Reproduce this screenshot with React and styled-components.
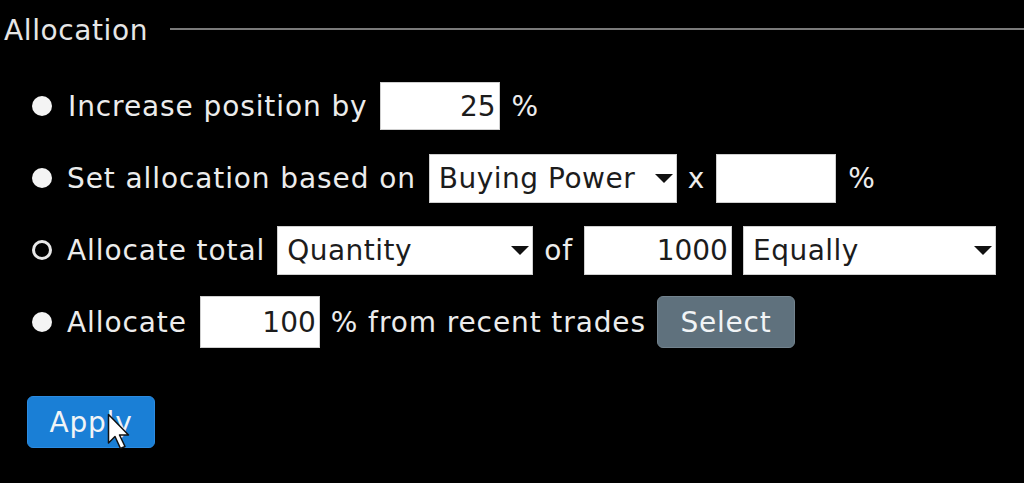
import React from "react";
import styled, { createGlobalStyle } from "styled-components";

const GlobalStyle = createGlobalStyle`
  html, body {
    margin: 0;
    padding: 0;
    background: #000;
  }
  body {
    font-family: "DejaVu Sans", Verdana, sans-serif;
    color: #ececec;
    overflow: hidden;
  }
`;

const Panel = styled.div`
  width: 1024px;
  height: 483px;
  background: #000;
  position: relative;
`;

const Header = styled.div`
  display: flex;
  align-items: center;
  gap: 22px;
  height: 58px;
  padding: 3px 0 0 4px;
  box-sizing: border-box;
`;

const Title = styled.span`
  font-size: 28px;
  letter-spacing: 0.6px;
  color: #e6e6e6;
  line-height: 1;
`;

const Rule = styled.div`
  flex: 1;
  height: 2px;
  margin-top: -4px;
  background: #7a7a7a;
`;

const Options = styled.div`
  display: flex;
  flex-direction: column;
  gap: 22px;
  padding: 23px 0 0 32px;
`;

const Row = styled.div`
  display: flex;
  align-items: center;
  height: 50px;
  gap: ${(p) => p.$gap || 12}px;
`;

const Radio = styled.span`
  width: 20px;
  height: 20px;
  border-radius: 50%;
  box-sizing: border-box;
  flex-shrink: 0;
  margin-right: 4px;
  background: ${(p) => (p.$checked ? "transparent" : "#f4f4f4")};
  border: ${(p) => (p.$checked ? "3px solid #e8e8e8" : "none")};
`;

const Label = styled.span`
  font-size: 28px;
  letter-spacing: 0.9px;
  white-space: nowrap;
  color: #ececec;
  margin-right: ${(p) => p.$after || 0}px;
  margin-left: ${(p) => p.$before || 0}px;
`;

const NumberInput = styled.input`
  box-sizing: border-box;
  width: ${(p) => p.$w}px;
  height: ${(p) => p.$h || 48}px;
  border: 1px solid #cfcfcf;
  background: #fff;
  font-family: "DejaVu Sans", Verdana, sans-serif;
  font-size: 28px;
  color: #1c1c1c;
  text-align: right;
  padding: 0 3px;
  outline: none;
`;

const SelectWrap = styled.div`
  position: relative;
  width: ${(p) => p.$w}px;
  height: 49px;
`;

const Select = styled.select`
  appearance: none;
  box-sizing: border-box;
  width: 100%;
  height: 100%;
  border: 1px solid #cfcfcf;
  border-radius: 0;
  background: #fff;
  font-family: "DejaVu Sans", Verdana, sans-serif;
  font-size: 28px;
  letter-spacing: 0.5px;
  color: #1c1c1c;
  padding: 0 0 0 9px;
  outline: none;
`;

const Arrow = styled.svg`
  position: absolute;
  right: 3px;
  top: 50%;
  margin-top: -5px;
  pointer-events: none;
`;

const Button = styled.button`
  box-sizing: border-box;
  height: 52px;
  width: ${(p) => p.$w}px;
  border: 1px solid ${(p) => (p.$primary ? "#2c8be0" : "#73838e")};
  border-radius: 6px;
  background: ${(p) => (p.$primary ? "#1a7fd6" : "#5f717d")};
  color: #f1f4f6;
  font-family: "DejaVu Sans", Verdana, sans-serif;
  font-size: 28px;
  letter-spacing: 0.8px;
  padding: 0;
`;

const Footer = styled.div`
  padding: 49px 0 0 27px;
  position: relative;
`;

const Cursor = styled.svg`
  position: absolute;
  left: 107px;
  top: 66px;
  pointer-events: none;
`;

function Dropdown({ width, value, options }) {
  return (
    <SelectWrap $w={width}>
      <Select defaultValue={value}>
        {options.map((o) => (
          <option key={o}>{o}</option>
        ))}
      </Select>
      <Arrow width="20" height="11" viewBox="0 0 20 11">
        <path d="M1 1 L19 1 L10 10 Z" fill="#111" />
      </Arrow>
    </SelectWrap>
  );
}

export default function App() {
  return (
    <Panel>
      <GlobalStyle />
      <Header>
        <Title>Allocation</Title>
        <Rule />
      </Header>
      <Options>
        <Row>
          <Radio />
          <Label>Increase position by</Label>
          <NumberInput $w={120} defaultValue="25" />
          <Label>%</Label>
        </Row>
        <Row $gap={11}>
          <Radio />
          <Label $after={2}>Set allocation based on</Label>
          <Dropdown width={248} value="Buying Power" options={["Buying Power", "Net Liquidation"]} />
          <Label>x</Label>
          <NumberInput $w={120} $h={49} defaultValue="" />
          <Label $before={1}>%</Label>
        </Row>
        <Row $gap={11}>
          <Radio $checked />
          <Label $after={1}>Allocate total</Label>
          <Dropdown width={256} value="Quantity" options={["Quantity", "Amount"]} />
          <Label>of</Label>
          <NumberInput $w={148} $h={49} defaultValue="1000" />
          <Dropdown width={253} value="Equally" options={["Equally", "Proportionally"]} />
        </Row>
        <Row $gap={11}>
          <Radio />
          <Label $after={2}>Allocate</Label>
          <NumberInput $w={120} $h={52} defaultValue="100" />
          <Label>% from recent trades</Label>
          <Button $w={138}>Select</Button>
        </Row>
      </Options>
      <Footer>
        <Button $primary $w={128}>Apply</Button>
        <Cursor width="26" height="38" viewBox="0 0 26 38">
          <path d="M1.5 1.5 L1.5 30 L8 23.5 L13.5 35.5 L18 33.5 L12.5 22 L21.5 22 Z" fill="#fff" stroke="#111" strokeWidth="1.5" strokeLinejoin="round" />
        </Cursor>
      </Footer>
    </Panel>
  );
}
